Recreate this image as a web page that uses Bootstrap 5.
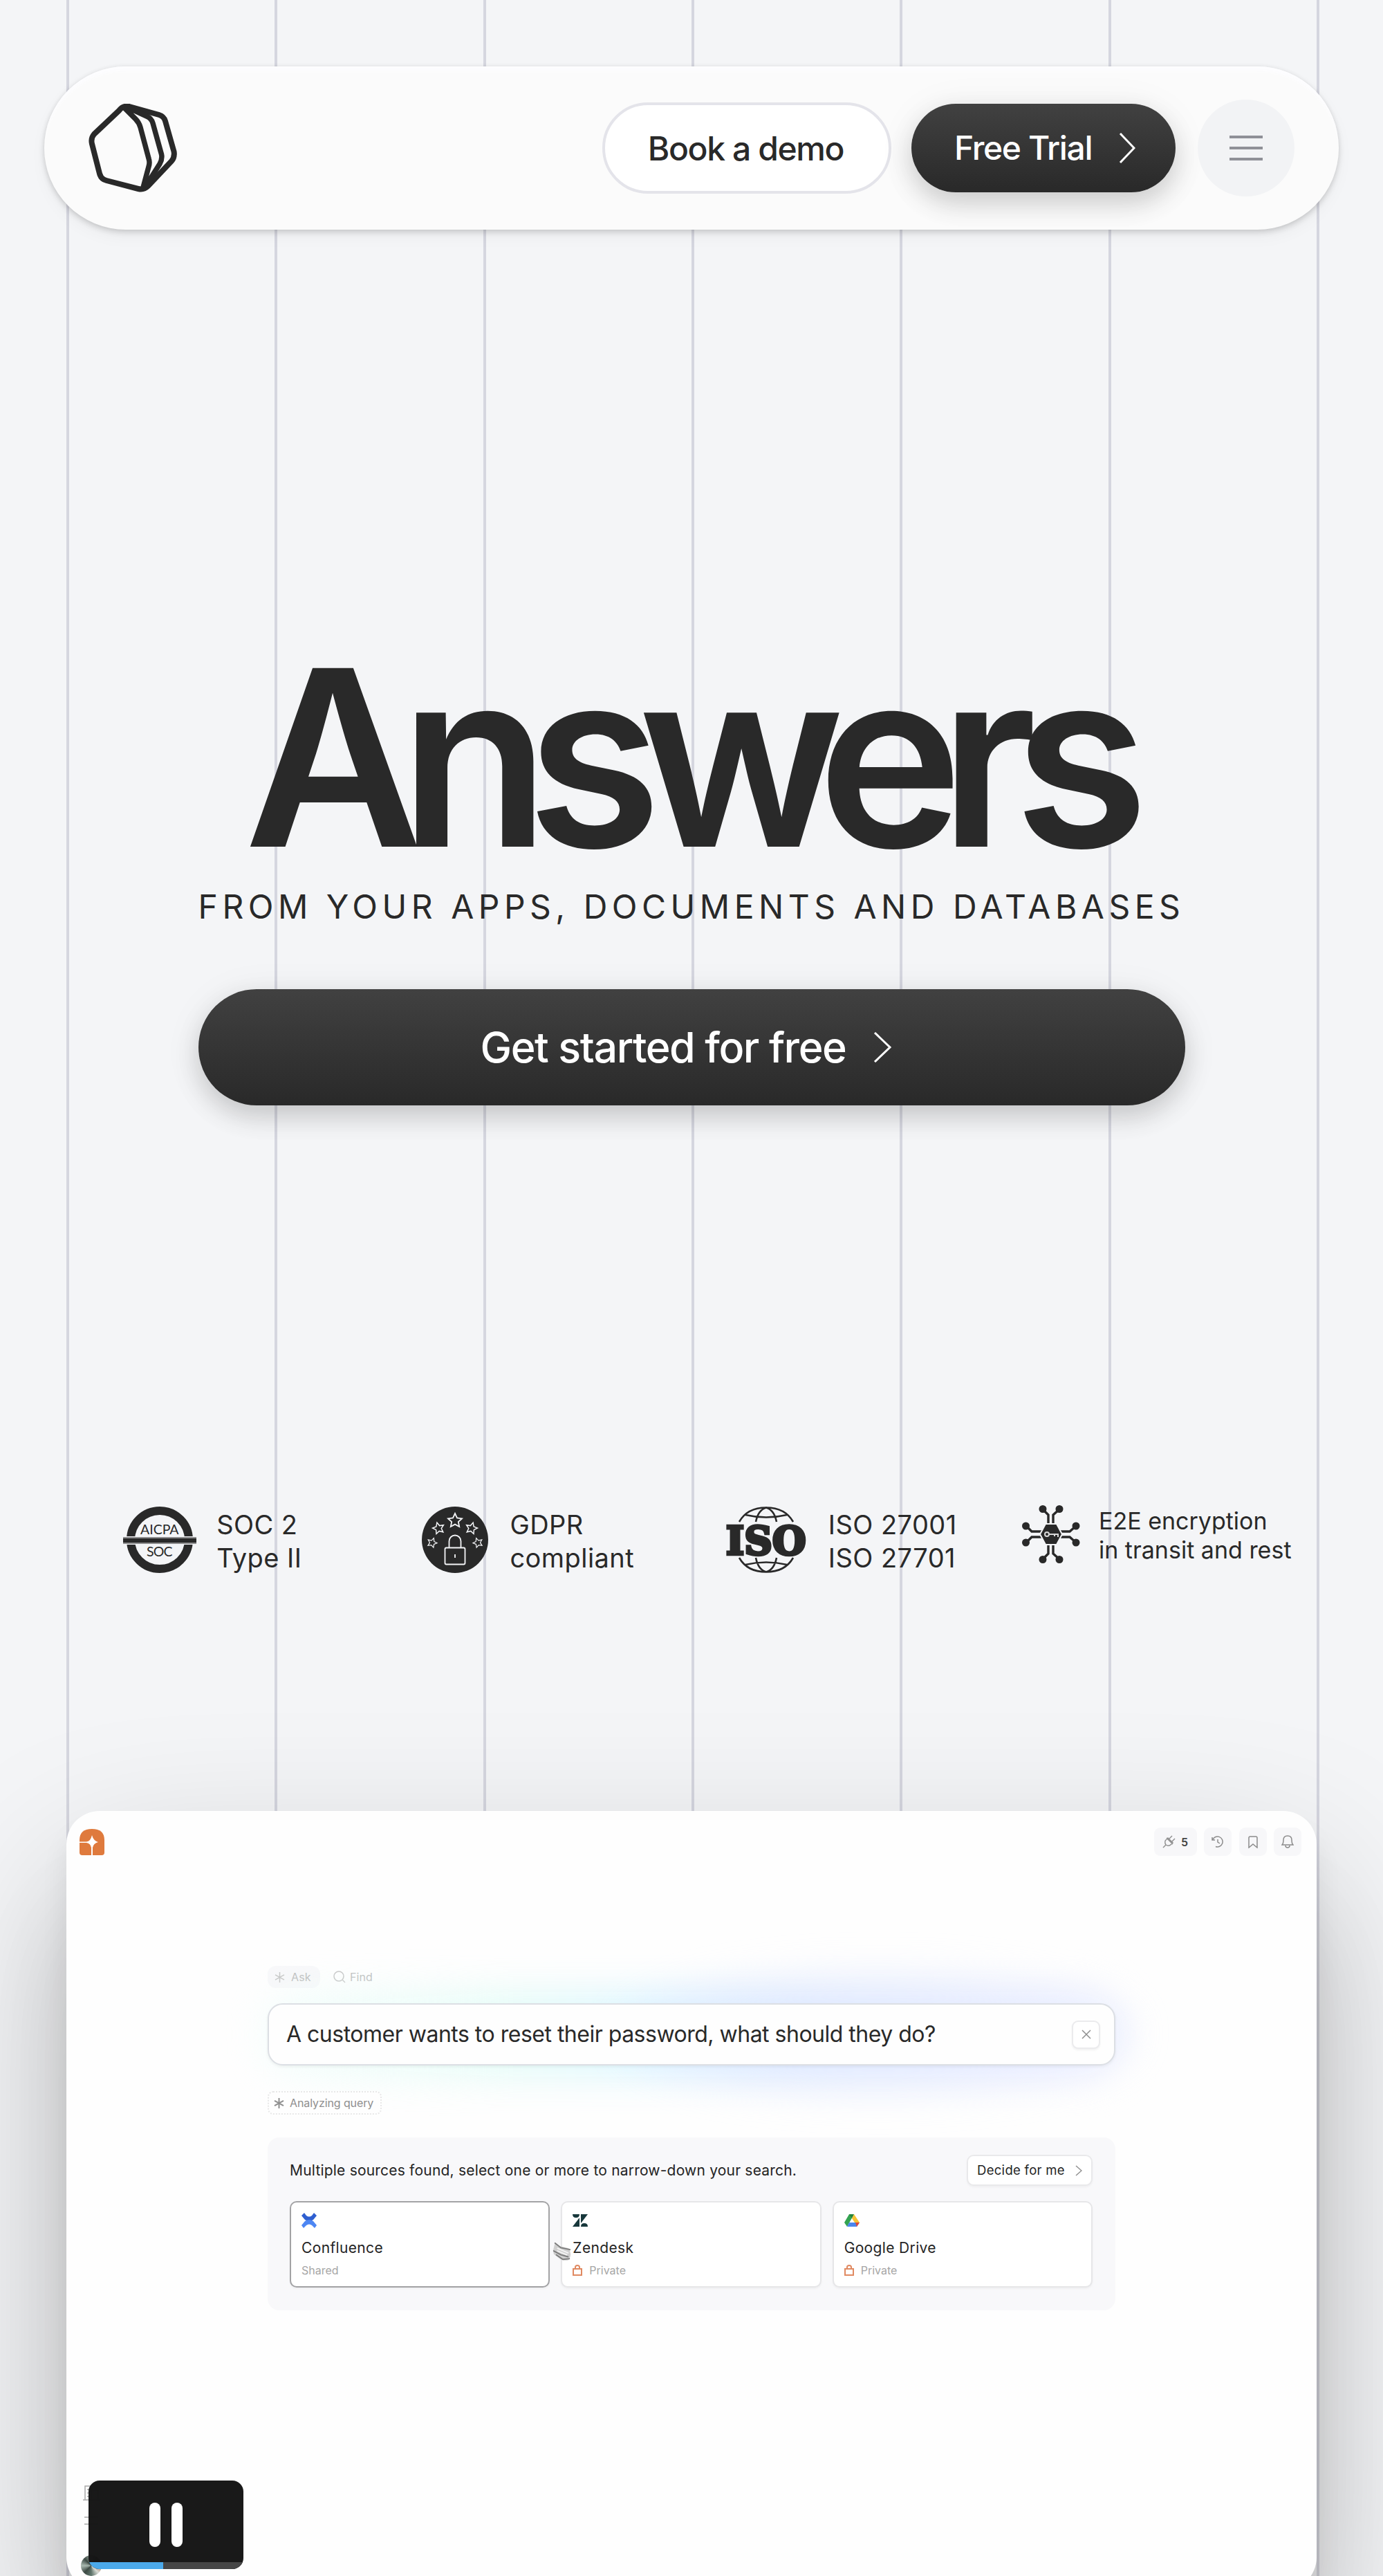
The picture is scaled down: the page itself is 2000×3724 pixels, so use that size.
<!DOCTYPE html>
<html lang="en">
<head>
    <meta charset="UTF-8">
    <meta name="viewport" content="width=device-width, initial-scale=1">
    <title>Answers from your apps, documents and databases</title>
    <link href="https://cdn.jsdelivr.net/npm/bootstrap@5.3.0/dist/css/bootstrap.min.css" rel="stylesheet">
    <style>
        body { background-color: #f4f5f7; color: #292929; font-family: Inter, "Liberation Sans", sans-serif; }
        svg { display: block; flex: none; }
        .page { height: 3724px; padding: 96px 64px 0; }
        .page > * { position: relative; }

        /* vertical guide lines behind everything */
        .page > .guides { position: absolute; top: 0; bottom: 0; left: 96px; width: 1812px; }
        .guides i { width: 4px; background: #d5d6df; }

        .topbar { height: 236px; padding: 0 64px; border-radius: 118px; background: #fbfbfb;
            box-shadow: 0 4px 8px rgba(0,0,0,.14), 0 0 6px rgba(0,0,0,.05), 0 10px 24px rgba(0,0,0,.04), inset 0 8px 6px -2px #fdfdff; }
        .pill { font-weight: 550; font-size: 48px; letter-spacing: -1.4px; line-height: 1; white-space: nowrap; }
        .pill-light { width: 418px; height: 132px; padding: 8px 15px 6px 12px; background: #fff; border: 4px solid #e4e4ea; color: #292929; }
        .pill-dark { background: linear-gradient(#414141, #292929); color: #fff; box-shadow: 0 16px 36px rgba(0,0,0,.16), 0 6px 60px rgba(0,0,0,.06); border: 0; }
        .pill-trial { width: 382px; height: 128px; padding: 0 58px 0 62px; margin: 0 32px 0 29px; }
        .burger { width: 140px; height: 140px; background: #f2f3f5; gap: 12px; border: 0; }
        .burger i { width: 48px; height: 4px; background: #8f9097; }

        .hero { margin-top: 633px; }
        .hero h1 { font-size: 355px; font-weight: 600; line-height: 260px; letter-spacing: -33.5px; padding-right: 19px; }
        .tagline { font-size: 48px; line-height: 60px; letter-spacing: 6.5px; margin: 56px 0 89px; white-space: nowrap; }
        .pill-start { width: 1427px; height: 168px; padding-right: 28px; font-size: 61px; font-weight: 500; letter-spacing: -1.4px; gap: 39px; }

        .trust { margin: 580px 35px 342px 11px; font-size: 38px; line-height: 48px; letter-spacing: .45px; }
        .trust-text { padding-top: 2px; }
        .trust-e2e { font-size: 34px; line-height: 42px; letter-spacing: 0; }

        .preview { height: 1127px; margin: 0 32px; padding-top: 24px; border-radius: 48px; background: #fefefe;
            box-shadow: 0 30px 40px rgba(0,0,0,.07), 0 160px 160px rgba(0,0,0,.08), 0 100px 240px rgba(0,0,0,.22); }
        .preview-bar { padding: 0 22px 0 19px; gap: 10.5px; }
        .chip { height: 41px; width: 40px; background: #f7f7f9; border-radius: 9px; color: #444; font-size: 16px; font-weight: 600; }
        .workspace { width: 1226px; margin-top: 159px; font-size: 16px; }
        .mode { height: 32px; color: #bdbdbd; gap: 9px; letter-spacing: .1px; }
        .mode-on { background: #f8f8fa; border-radius: 12px; width: 76px; padding-left: 10px; }

        .ask { margin-top: 22px; position: relative; z-index: 0; }
        .ask::before { content: ""; position: absolute; z-index: -1; inset: -16px -8px; filter: blur(26px);
            background: linear-gradient(90deg, rgba(240,255,252,.5), #e4fcf7 28%, #dbf5ff 45%, #dae7ff 62%, #e9ecff 85%, #f1f3ff); border-radius: 50px; }
        .ask::after { content: ""; position: absolute; z-index: -1; left: 520px; right: -20px; top: -40px; bottom: -36px; filter: blur(28px);
            background: rgba(224,232,255,.45); border-radius: 50%; }
        .ask-box { height: 90px; border: 2px solid #dcdfe4; border-radius: 22px; background: #fefefe; padding: 0 20px 0 25px;
            font-size: 32px; letter-spacing: -.5px; white-space: nowrap; box-shadow: 0 2px 4px rgba(0,0,0,.06); }
        .ask-close { width: 41px; height: 41px; border: 2px solid #ebebed; border-radius: 9px; background: #fff; color: #999; box-shadow: 0 2px 3px rgba(0,0,0,.05); }
        .status { width: 165px; height: 34px; margin: 37px 0 33px; padding-left: 7px; gap: 8px; border: 2px dotted #e8e8e8; border-radius: 8px; color: #8f8f8f; letter-spacing: -.1px; white-space: nowrap; background: #fefefe; position: relative; }

        .sources { height: 250px; padding: 25px 33px 25px 32px; border-radius: 17px; background: #f8f8fa; font-size: 21px; color: #242424; position: relative; }
        .sources-head { height: 45px; margin-bottom: 22px; letter-spacing: .2px; }
        .decide { width: 182px; height: 45px; padding: 0 13px; border: 2px solid #e9e9eb; border-radius: 10px; background: #fff; font-size: 18.500px; letter-spacing: .3px; color: #242424; box-shadow: 0 2px 3px rgba(0,0,0,.04); }
        .source { height: 125px; padding: 15px; border: 2px solid #e6e6e8; border-radius: 10px; background: #fff; box-shadow: 0 2px 3px rgba(0,0,0,.04); letter-spacing: .35px; }
        .source-on { border-color: #a3a3a5; }
        .source-name { line-height: 28px; margin: 15px 0 8px; }
        .source-access { font-size: 16px; line-height: 20px; letter-spacing: 0; color: #a6a6a6; gap: 10px; }
        .pointer { left: 411px; top: 150px; }

        .side-tools { left: 20px; top: 974px; color: #aaa; }
        .avatar { width: 30px; height: 30px; margin-left: 1px; background: conic-gradient(#9aa79f, #2c332f, #a87761, #d9dcd5, #60756c, #3d4a44, #a9b9b0, #3c4944, #9aa79f); }
        .player { position: absolute; left: 128px; top: 3586px; width: 224px; height: 128px; border-radius: 16px; background: rgba(20,20,20,.98); gap: 16px; }
        .player b { width: 16px; height: 64px; border-radius: 8px; background: #fff; }
        .player-track { left: 0; right: 0; bottom: 0; height: 10px; background: #464646; }
        .player-track div { height: 10px; background: #4ba9ea; }
    </style>
</head>
<body>
    <div class="page position-relative overflow-hidden">
        <div class="guides d-flex justify-content-between"><i></i><i></i><i></i><i></i><i></i><i></i><i></i></div>

        <nav class="topbar d-flex align-items-center">
            <a href="#" class="me-auto" aria-label="Home">
                <svg width="130" height="128" viewBox="0 0 130 128" fill="none" stroke="#292929" stroke-width="8" stroke-linejoin="round">
                    <path d="M44 10Q50 2 59 4L102 16Q109 18 111 25L123.500 69Q125 77 120 83L86 119Q80 125 72 123L26 111Q18 109 16 101L5 58Q3 50 8 44Z"/>
                    <path d="M51 5L68 22Q73 27 75 34L87 79Q89 85 87 91L79 121M58 6L84 18Q91 21 93 28L105.500 73Q107 80 103 87L82 120" stroke-width="7.500"/>
                </svg>
            </a>
            <a href="#" class="btn pill pill-light rounded-pill d-flex align-items-center justify-content-center">Book a demo</a>
            <a href="#" class="btn pill pill-dark pill-trial rounded-pill d-flex align-items-center justify-content-between">Free Trial
                <svg width="24" height="44" viewBox="0 0 24 44" fill="none" stroke="#fff" stroke-width="3"><path d="M2 1L22 22L2 43"/></svg>
            </a>
            <button class="burger rounded-circle d-flex flex-column align-items-center justify-content-center" aria-label="Menu"><i></i><i></i><i></i></button>
        </nav>

        <section class="hero d-flex flex-column align-items-center">
            <h1 class="m-0">Answers</h1>
            <p class="tagline">FROM YOUR APPS, DOCUMENTS AND DATABASES</p>
            <a href="#" class="btn pill pill-dark pill-start rounded-pill d-flex align-items-center justify-content-center">Get started for free
                <svg width="27" height="44" viewBox="0 0 27 44" fill="none" stroke="#fff" stroke-width="3"><path d="M2 1L24 22L2 43"/></svg>
            </a>
        </section>

        <section class="trust row g-0 align-items-start text-nowrap">
            <div class="col-3 d-flex justify-content-center ps-2">
                <svg width="106" height="96" viewBox="0 0 106 96" style="margin-right:29px">
                    <circle cx="53" cy="48" r="42" fill="none" stroke="#292929" stroke-width="12"/>
                    <rect y="43" width="106" height="12" fill="#f4f5f7"/>
                    <rect y="44" width="106" height="10" fill="#8b8b8c"/>
                    <rect y="46" width="106" height="6" fill="#292929"/>
                    <g font-family="Lato, sans-serif" font-size="19.500" fill="#292929" text-anchor="middle">
                        <text x="53" y="40" textLength="56">AICPA</text>
                        <text x="53" y="72" textLength="38">SOC</text>
                    </g>
                </svg>
                <div class="trust-text">SOC 2<br>Type II</div>
            </div>
            <div class="col-3 d-flex justify-content-center ps-2">
                <svg width="96" height="96" viewBox="0 0 96 96" fill="none" stroke="#f4f5f7" stroke-width="1.800" style="margin-right:31px">
                    <defs><path id="star" d="M0-10L3-3.500 10-2.700 4.800 2 6.200 9 0 5.600-6.200 9-4.800 2-10-2.700-3-3.500Z"/></defs>
                    <circle cx="48" cy="48" r="48" fill="#292929" stroke="none"/>
                    <use href="#star" x="48" y="20"/>
                    <use href="#star" transform="translate(24 31) scale(.82) rotate(-15)"/>
                    <use href="#star" transform="translate(72 31) scale(.82) rotate(15)"/>
                    <use href="#star" transform="translate(15 52) scale(.68) rotate(20)"/>
                    <use href="#star" transform="translate(81 52) scale(.68) rotate(-20)"/>
                    <rect x="33.500" y="59.500" width="29" height="24" rx="2"/>
                    <path d="M39.500 59V50a8.500 8.500 0 0 1 17 0V59M48 69V74"/>
                </svg>
                <div class="trust-text">GDPR<br>compliant</div>
            </div>
            <div class="col-3 d-flex justify-content-center">
                <svg width="119" height="96" viewBox="0 0 119 96" style="margin-right:30px">
                    <g id="cap" fill="none" stroke="#292929" stroke-width="2.600">
                        <path d="M20 22C28 8 42 1.500 59 1.500S90 8 98 22M59 1.500C50 4 46 12 44 22M59 1.500C68 4 72 12 74 22M29 12Q59 19 89 12"/>
                    </g>
                    <use href="#cap" transform="translate(0 96) scale(1 -1)"/>
                    <text x="1" y="69" font-family="DejaVu Serif, serif" font-weight="700" font-size="56" fill="#292929" stroke="#292929" stroke-width="4.500" textLength="116" lengthAdjust="spacingAndGlyphs">ISO</text>
                </svg>
                <div class="trust-text">ISO 27001<br>ISO 27701</div>
            </div>
            <div class="col-3 d-flex justify-content-center trust-e2e">
                <svg width="84" height="84" viewBox="0 0 84 84" style="margin-right:27px;margin-top:-2px">
                    <g stroke="#292929" stroke-width="3.400" fill="none">
                        <path d="M30 6L38 14V70L30 78M54 6L45 14V70L54 78M6 30L14 38H69L78 30M6 54L14 46H69L78 54"/>
                    </g>
                    <g fill="#292929">
                        <circle cx="30" cy="5.500" r="5.500"/><circle cx="54" cy="5.500" r="5.500"/><circle cx="30" cy="78.500" r="5.500"/><circle cx="54" cy="78.500" r="5.500"/>
                        <circle cx="5.500" cy="30" r="5.500"/><circle cx="78" cy="30" r="5.500"/><circle cx="5.500" cy="54" r="5.500"/><circle cx="78" cy="54" r="5.500"/>
                        <path d="M34 27H50L58 42L50 57H34L26 42Z" stroke="#f4f5f7" stroke-width="2"/>
                    </g>
                    <path d="M39 42H52V46M47 42V45" fill="none" stroke="#d8d8d8" stroke-width="2"/>
                    <circle cx="36" cy="42" r="3" fill="none" stroke="#d8d8d8" stroke-width="2"/>
                </svg>
                <div>E2E encryption<br>in transit and rest</div>
            </div>
        </section>

        <section class="preview">
            <div class="preview-bar d-flex align-items-center">
                <svg class="me-auto" width="36" height="38" viewBox="0 0 36 38">
                    <path d="M0 16Q0 0 18 0T36 16V34Q36 38 32 38H4Q0 38 0 34Z" fill="#df7a3d"/>
                    <path d="M0 18.500H10Q16 18 18 9Q20 17 27 19Q20 21 19 27V38H17V27Q16 21 10 20H0Z" fill="#fff"/>
                </svg>
                <div class="chip d-flex align-items-center justify-content-center" style="width:62px;gap:8px">
                    <svg width="19" height="19" viewBox="0 0 19 19" fill="none" stroke="#929292" stroke-width="1.500"><path d="M1 18L5 14M5 14Q2 9 6 6L8 4L15 11L13 13Q9 17 5 14ZM10 5L14 1M14 9L18 5M6 4L15 13"/></svg>5
                </div>
                <div class="chip d-flex align-items-center justify-content-center">
                    <svg width="18" height="18" viewBox="0 0 18 18" fill="none" stroke="#8c8c8c" stroke-width="1.500"><path d="M1 2V6H5M1.500 6A7.500 7.500 0 1 1 6 15.500M9 5V9L12 11"/></svg>
                </div>
                <div class="chip d-flex align-items-center justify-content-center">
                    <svg width="14" height="18" viewBox="0 0 14 18" fill="none" stroke="#8c8c8c" stroke-width="1.500"><path d="M1 17V3Q1 1 3 1H11Q13 1 13 3V17L7 12Z"/></svg>
                </div>
                <div class="chip d-flex align-items-center justify-content-center">
                    <svg width="18" height="19" viewBox="0 0 18 19" fill="none" stroke="#8c8c8c" stroke-width="1.500"><path d="M1 14Q3 12 3 7Q3 1 9 1T15 7Q15 12 17 14ZM6 15Q6 18 9 18T12 15"/></svg>
                </div>
            </div>

            <div class="workspace mx-auto">
                <div class="d-flex">
                    <div class="mode mode-on d-flex align-items-center">
                        <svg width="15" height="15" viewBox="0 0 15 15" stroke="#c6c6c6" stroke-width="1.500"><path d="M7.500 0V15M1 3.800L14 11.200M14 3.800L1 11.200"/></svg>Ask
                    </div>
                    <div class="mode d-flex align-items-center" style="margin-left:19px;gap:6px">
                        <svg width="18" height="18" viewBox="0 0 18 18" fill="none" stroke="#c6c6c6" stroke-width="1.500"><circle cx="8" cy="8" r="7"/><path d="M13 13L17 17"/></svg>Find
                    </div>
                </div>

                <div class="ask">
                    <div class="ask-box d-flex align-items-center justify-content-between">
                        <span>A customer wants to reset their password, what should they do?</span>
                        <button class="ask-close d-flex align-items-center justify-content-center p-0" aria-label="Clear">
                            <svg width="14" height="14" viewBox="0 0 14 14" stroke="#8f8f8f" stroke-width="1.500"><path d="M1 1L13 13M13 1L1 13"/></svg>
                        </button>
                    </div>
                </div>

                <div class="status d-flex align-items-center">
                    <svg width="15" height="15" viewBox="0 0 15 15" stroke="#8f8f8f" stroke-width="2"><path d="M7.500 0V15M1 3.800L14 11.200M14 3.800L1 11.200"/></svg>Analyzing query
                </div>

                <div class="sources">
                    <div class="sources-head d-flex align-items-center justify-content-between text-nowrap">
                        <span>Multiple sources found, select one or more to narrow-down your search.</span>
                        <button class="decide d-flex align-items-center justify-content-between">Decide for me
                            <svg width="10" height="16" viewBox="0 0 10 16" fill="none" stroke="#8f8f8f" stroke-width="1.500"><path d="M1 1L9 8L1 15"/></svg>
                        </button>
                    </div>
                    <div class="row" style="--bs-gutter-x:16px">
                        <div class="col-4">
                            <div class="source source-on">
                                <svg width="22" height="22" viewBox="0 0 22 22">
                                    <path d="M4 0L7 4Q11 7 15 4L18 0L22 4L17 10Q11 14 5 10L0 4Z" fill="#2f5fd0"/>
                                    <path d="M3 22L7 18Q11 15 15 18L19 22L22 18L17 12Q11 8 5 12L0 18Z" fill="#4d86f3"/>
                                </svg>
                                <div class="source-name">Confluence</div>
                                <div class="source-access">Shared</div>
                            </div>
                        </div>
                        <div class="col-4">
                            <div class="source">
                                <svg width="22" height="22" viewBox="0 0 22 22" fill="#17373b"><path d="M0 2H10Q10 7 5 7T0 2ZM10 7V20H0ZM12 2H22L12 15ZM12 20Q12 15 17 15T22 20Z"/></svg>
                                <div class="source-name">Zendesk</div>
                                <div class="source-access d-flex align-items-center">
                                    <svg width="14" height="16" viewBox="0 0 14 16" fill="none" stroke="#e08a62" stroke-width="2"><path d="M1 6H13V15H1ZM4 6V3.500Q4 1 7 1T10 3.500V6"/></svg>Private
                                </div>
                            </div>
                        </div>
                        <div class="col-4">
                            <div class="source">
                                <svg width="22" height="22" viewBox="0 0 22 22">
                                    <path d="M7 2H14L4 20L0 14Z" fill="#34a350"/><path d="M7 2H14L11 8Z" fill="#23813a"/>
                                    <path d="M14 2L22 14H15L11 8Z" fill="#f7c234"/><path d="M4 20L7 14H22L18 20Z" fill="#4a86ee"/><path d="M16 14H22L18 20Z" fill="#df4939"/>
                                </svg>
                                <div class="source-name">Google Drive</div>
                                <div class="source-access d-flex align-items-center">
                                    <svg width="14" height="16" viewBox="0 0 14 16" fill="none" stroke="#e08a62" stroke-width="2"><path d="M1 6H13V15H1ZM4 6V3.500Q4 1 7 1T10 3.500V6"/></svg>Private
                                </div>
                            </div>
                        </div>
                    </div>
                    <!-- hand cursor in motion -->
                    <svg class="pointer position-absolute" width="30" height="30" viewBox="0 0 32 32" fill="none" stroke-linecap="round">
                        <path d="M5 2L10 7L26 11Q32 20 26 29Q17 31 11 26L3 20L2 14Z" fill="#cfcfcf"/>
                        <path d="M5 3L14 10L28 13M3 15L14 21L25 24M7 21L17 28L27 27" stroke="#7c7c7c" stroke-width="2"/>
                        <path d="M9 11L25 18M9 15L23 21" stroke="#f4f4f4" stroke-width="2"/>
                    </svg>
                </div>
            </div>

            <div class="side-tools position-absolute">
                <svg width="34" height="60" viewBox="0 0 34 60" fill="none" stroke="#a8a8a8" stroke-width="1.500">
                    <path d="M4 22H28M7 22V2H16V22M16 8H26V22M10 7H13M10 12H13M10 17H13"/>
                    <path d="M6 57H26M6 47H26"/>
                </svg>
                <div class="avatar rounded-circle" style="margin-top:42px"></div>
            </div>
        </section>

        <div class="player d-flex align-items-center justify-content-center overflow-hidden">
            <b></b><b></b>
            <div class="player-track position-absolute"><div style="width:48.200%"></div></div>
        </div>
    </div>
    <script src="https://cdn.jsdelivr.net/npm/bootstrap@5.3.0/dist/js/bootstrap.bundle.min.js"></script>
</body>
</html>
